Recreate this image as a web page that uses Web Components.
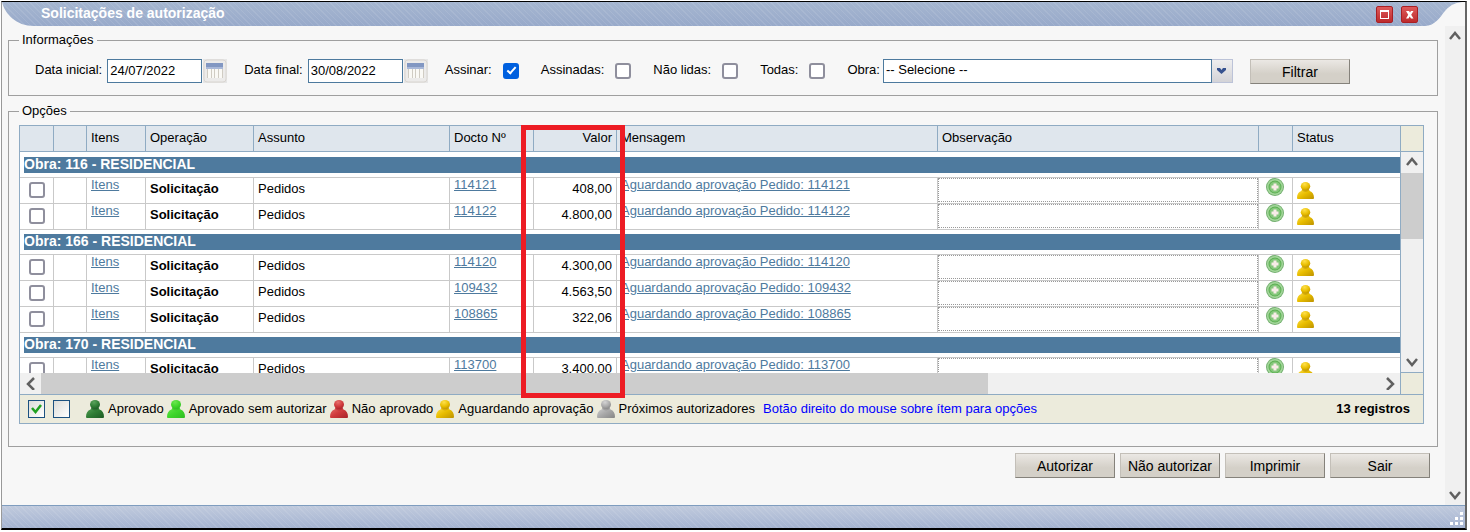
<!DOCTYPE html>
<html lang="pt-BR">
<head>
<meta charset="utf-8">
<title>Solicitações de autorização</title>
<style>
  body {
    margin: 0;
    background: #fff;
    color: #000;
    font: 13px/14px "Liberation Sans", Arial, sans-serif;
  }
</style>
</head>
<body>
<app-window heading="Solicitações de autorização">
  <field-group heading="Informações">
    <filter-bar></filter-bar>
  </field-group>
  <field-group heading="Opções" class="tall">
    <request-grid></request-grid>
  </field-group>
  <button-row>
    <push-button>Autorizar</push-button>
    <push-button>Não autorizar</push-button>
    <push-button>Imprimir</push-button>
    <push-button>Sair</push-button>
  </button-row>
</app-window>

<script>
const stripes = "repeating-linear-gradient(45deg, rgba(255,255,255,.09) 0 1px, transparent 1px 4px)";

const checkboxCss = `
  input[type=checkbox] {
    appearance: none;
    flex: none;
    display: block;
    width: 16px;
    height: 16px;
    margin: 0;
    border: 2px solid #8f8f9d;
    border-radius: 3px;
    background: #fff;
    box-sizing: border-box;
  }
  input[type=checkbox]:checked {
    border-color: #0060df;
    background: #0060df;
  }
  input[type=checkbox]:checked::after {
    content: "";
    display: block;
    width: 3px;
    height: 7px;
    margin: 0 0 0 4px;
    border: solid #fff;
    border-width: 0 2px 2px 0;
    transform: rotate(42deg);
  }
`;

class AppWindow extends HTMLElement {
  constructor() {
    super();
    const shadow = this.attachShadow({ mode: "open" });
    shadow.innerHTML = `
      <style>
        :host {
          display: flex;
          flex-direction: column;
          box-sizing: border-box;
          min-height: calc(100vh - 3px);
          margin: 1px 3px 2px 1px;
          background: #f7f7f7;
          border: solid #000;
          border-width: 1px 2px 2px 1px;
          border-left-color: #999;
          border-right-color: #666;
        }
        header {
          display: flex;
          align-items: center;
          height: 24px;
          background: ${stripes}, linear-gradient(#a5b6d0, #98aaca);
        }
        header svg { display: block; flex: none; }
        h1 {
          flex: 1;
          margin: 0 0 0 7px;
          padding-bottom: 2px;
          color: #fff;
          font-size: 14px;
          line-height: 16px;
        }
        .tools { display: flex; gap: 8px; margin-right: 7px; }
        .tools button {
          width: 17px;
          height: 17px;
          padding: 0;
          border: 1px solid #a91f24;
          border-radius: 2px;
          background: linear-gradient(#de5a5a, #bd2a2c);
        }
        .body { flex: 1; display: flex; }
        main { flex: 1; min-width: 0; padding: 7px 7px 0 6px; }
        scroll-bar { flex: none; width: 20px; }
        footer {
          display: flex;
          justify-content: flex-end;
          align-items: flex-end;
          height: 22px;
          border-top: 1px solid #7f9dbf;
          background: ${stripes}, linear-gradient(#c0cadd, #a5b4d1);
        }
        footer svg { display: block; margin: 0 2px 3px 0; }
      </style>
      <header>
        <svg width="32" height="24" viewBox="0 0 32 24"><path fill="#f7f7f7" d="M0 0C3 12 14 24 32 24H0Z"/></svg>
        <h1></h1>
        <div class="tools">
          <button type="button" aria-label="Maximizar"><svg width="15" height="15" viewBox="0 0 15 15"><path fill="#fff" fill-rule="evenodd" d="M3 3h9v9H3ZM4 5v6h7V5Z"/></svg></button>
          <button type="button" aria-label="Fechar"><svg width="15" height="15" viewBox="0 0 15 15"><path fill="#fff" d="M4 4h3l1 1.500 1-1.500h2.500L9.200 7.700 11.500 11.500H9L7.700 9.500 6.500 11.500H4l2.200-3.700Z"/></svg></button>
        </div>
        <svg width="40" height="24" viewBox="0 0 40 24"><path fill="#f7f7f7" d="M0 24C10 24 15 15 20 9 26 2 32 0 40 0V24Z"/></svg>
      </header>
      <div class="body">
        <main><slot></slot></main>
        <scroll-bar></scroll-bar>
      </div>
      <footer>
        <svg width="14" height="13" viewBox="0 0 14 13" fill="#fff"><path d="M11 0h3v3h-3zM11 5h3v3h-3zM6 5h3v3H6zM11 10h3v3h-3zM6 10h3v3H6zM1 10h3v3H1z"/></svg>
      </footer>
    `;
    shadow.querySelector("h1").textContent = this.getAttribute("heading");
  }
}

class FieldGroup extends HTMLElement {
  constructor() {
    super();
    const shadow = this.attachShadow({ mode: "open" });
    shadow.innerHTML = `
      <style>
        :host { display: block; margin-bottom: 8px; }
        :host(.tall) { margin-bottom: 6px; }
        fieldset {
          min-width: 0;
          margin: 0;
          padding: 12px 13px 11px 10px;
          border: 1px solid #9f9f9f;
        }
        :host(.tall) fieldset { padding-top: 7px; padding-bottom: 22px; }
        legend { padding: 0 3px; }
      </style>
      <fieldset>
        <legend></legend>
        <slot></slot>
      </fieldset>
    `;
    shadow.querySelector("legend").textContent = this.getAttribute("heading");
  }
}

class PushButton extends HTMLElement {
  constructor() {
    super();
    this.attachShadow({ mode: "open" }).innerHTML = `
      <style>
        :host { display: block; }
        button {
          display: block;
          width: 100px;
          height: 25px;
          padding: 0;
          border: 1px solid;
          border-color: #c3bfb8 #85827b #85827b #c3bfb8;
          background: linear-gradient(#ebe8e4, #d4d0c8 60%);
          color: #000;
          font: 14px/16px "Liberation Sans", Arial, sans-serif;
          white-space: nowrap;
        }
      </style>
      <button type="button"><slot></slot></button>
    `;
  }
}

class ButtonRow extends HTMLElement {
  constructor() {
    super();
    this.attachShadow({ mode: "open" }).innerHTML = `
      <style>
        :host {
          display: flex;
          justify-content: flex-end;
          gap: 5px;
          padding-right: 8px;
        }
      </style>
      <slot></slot>
    `;
  }
}

class FilterBar extends HTMLElement {
  constructor() {
    super();
    this.attachShadow({ mode: "open" }).innerHTML = `
      <style>
        :host {
          display: flex;
          align-items: flex-start;
          gap: 17px;
          padding-left: 16px;
          white-space: nowrap;
        }
      </style>
      <date-field label="Data inicial:" value="24/07/2022"></date-field>
      <date-field label="Data final:" value="30/08/2022"></date-field>
      <check-field label="Assinar:" checked></check-field>
      <check-field label="Assinadas:"></check-field>
      <check-field label="Não lidas:"></check-field>
      <check-field label="Todas:"></check-field>
      <combo-field label="Obra:" value="-- Selecione --"></combo-field>
      <push-button>Filtrar</push-button>
    `;
  }
}

class DateField extends HTMLElement {
  constructor() {
    super();
    this.attachShadow({ mode: "open" }).innerHTML = `
      <style>
        :host { display: flex; align-items: center; }
        label { padding-bottom: 2px; }
        input {
          box-sizing: border-box;
          width: 95px;
          height: 24px;
          margin: 0 1px 0 5px;
          padding: 0 2px 2px;
          border: 1px solid #4d7a9e;
          background: #fff;
          color: #000;
          font: inherit;
        }
        button {
          width: 24px;
          height: 24px;
          padding: 0;
          border: 0;
          background: none;
        }
        svg { display: block; }
      </style>
      <label for="date">${this.getAttribute("label")}</label>
      <input id="date" type="text" value="${this.getAttribute("value")}">
      <button type="button" aria-label="Calendário">
        <svg width="24" height="24" viewBox="0 0 24 24">
          <path fill="#e6e6e6" d="M0 0h24v24H0z"/>
          <rect x="1" y="1" width="22" height="22" rx="3" fill="#ecebea" stroke="#d9d5d0"/>
          <path fill="#8297c2" d="M3 4h17v5H3z"/>
          <path fill="#a9b8d8" d="M3 8h17v2H3z"/>
          <path fill="#d0ccc3" d="M4 10h16v9H4z"/>
          <path fill="#faf9f5" d="M5 10h3v9H5zM9 10h2v9H9zM12 10h3v9h-3zM16 10h3v9h-3z"/>
        </svg>
      </button>
    `;
  }
}

class CheckField extends HTMLElement {
  constructor() {
    super();
    this.attachShadow({ mode: "open" }).innerHTML = `
      <style>
        :host {
          display: flex;
          align-items: center;
          gap: 11px;
          height: 24px;
          padding-right: 5px;
        }
        label { padding-bottom: 2px; }
        ${checkboxCss}
      </style>
      <label for="box">${this.getAttribute("label")}</label>
      <input id="box" type="checkbox" ${this.hasAttribute("checked") ? "checked" : ""}>
    `;
  }
}

class ComboField extends HTMLElement {
  constructor() {
    super();
    this.attachShadow({ mode: "open" }).innerHTML = `
      <style>
        :host { display: flex; align-items: center; }
        label { padding-bottom: 2px; }
        select {
          appearance: none;
          box-sizing: border-box;
          width: 329px;
          height: 24px;
          margin: 0 0 0 3px;
          padding: 0 2px 2px;
          border: 1px solid #4d7a9e;
          border-radius: 0;
          background: #fff;
          color: #000;
          font: inherit;
        }
        .arrow {
          display: grid;
          place-items: center;
          box-sizing: border-box;
          width: 21px;
          height: 24px;
          border: 1px solid #bcc3d8;
          border-left: 0;
          background: linear-gradient(#eeeeef, #d3d3d7);
        }
      </style>
      <label for="combo">${this.getAttribute("label")}</label>
      <select id="combo"><option>${this.getAttribute("value")}</option></select>
      <span class="arrow">
        <svg width="11" height="8" viewBox="0 0 11 8"><path fill="#36528f" d="M1 1h3l1.500 2L7 1h3v2L5.500 7 1 3Z"/></svg>
      </span>
    `;
  }
}

class ScrollBar extends HTMLElement {
  constructor() {
    super();
    const across = this.hasAttribute("horizontal");
    const back = across ? "M9 1 3 7l6 6" : "M1 9l5-6 5 6";
    const forward = across ? "M3 1l6 6-6 6" : "M1 4l5 6 5-6";
    this.attachShadow({ mode: "open" }).innerHTML = `
      <style>
        :host {
          display: flex;
          flex-direction: ${across ? "row" : "column"};
          background: #f0f0f0;
        }
        button {
          flex: 0 0 21px;
          display: grid;
          place-items: center;
          padding: 0;
          border: 0;
          background: none;
        }
        .track { flex: 1; display: flex; flex-direction: inherit; }
        .thumb { flex: 0 0 var(--thumb, 0px); background: #cdcdcd; }
      </style>
      <button type="button" aria-label="Voltar">${this.chevron(back)}</button>
      <div class="track"><div class="thumb"></div></div>
      <button type="button" aria-label="Avançar">${this.chevron(forward)}</button>
    `;
  }

  chevron(d) {
    return `<svg width="12" height="13" viewBox="0 0 12 13"><path d="${d}" fill="none" stroke="#606060" stroke-width="2.500"/></svg>`;
  }
}

// light, base and dark tone of each status
const statusColors = {
  approved: ["#5aa35c", "#2f7d35", "#1c5a24"],
  direct: ["#6be64e", "#3fd62a", "#2ebc20"],
  refused: ["#e8706c", "#cf3a3c", "#a82429"],
  waiting: ["#ffe04a", "#e8bd00", "#bd9200"],
  next: ["#d4d4d4", "#a9a9a9", "#858585"]
};

class StatusPerson extends HTMLElement {
  constructor() {
    super();
    const [light, base, dark] = statusColors[this.getAttribute("status")];
    this.attachShadow({ mode: "open" }).innerHTML = `
      <style>
        :host { display: block; flex: none; width: 18px; height: 18px; }
        :host([small]) { width: 17px; height: 17px; }
        svg { display: block; width: 100%; height: 100%; }
      </style>
      <svg viewBox="0 0 18 18">
        <defs>
          <radialGradient id="head" cx=".4" cy=".25" r=".8">
            <stop offset="0" stop-color="${light}"/><stop offset=".6" stop-color="${base}"/><stop offset="1" stop-color="${dark}"/>
          </radialGradient>
          <linearGradient id="torso" x2="1" y2="1">
            <stop offset="0" stop-color="${light}"/><stop offset=".5" stop-color="${base}"/><stop offset="1" stop-color="${dark}"/>
          </linearGradient>
        </defs>
        <path fill="url(#torso)" d="M0 17C0 13 1.500 10.500 4.500 9.500L6 7h6l1.500 2.500C16.500 10.500 18 13 18 17q0 1-1 1H1q-1 0-1-1Z"/>
        <path fill="${dark}" opacity=".5" d="M5 8.500q4 4 8 0L12 7H6Z"/>
        <ellipse cx="9" cy="4.500" rx="5" ry="4.500" fill="url(#head)"/>
      </svg>
    `;
  }
}

const groups = [
  ["Obra: 116 - RESIDENCIAL", [["114121", "408,00"], ["114122", "4.800,00"]]],
  ["Obra: 166 - RESIDENCIAL", [["114120", "4.300,00"], ["109432", "4.563,50"], ["108865", "322,06"]]],
  ["Obra: 170 - RESIDENCIAL", [["113700", "3.400,00"]]]
];

const addIcon = `
  <svg width="18" height="18" viewBox="0 0 18 18">
    <circle cx="9" cy="9" r="9" fill="#74b070"/>
    <circle cx="9" cy="9" r="8" fill="#a5d79c"/>
    <circle cx="9" cy="9" r="6.500" fill="#5cb052"/>
    <circle cx="9" cy="9" r="5.500" fill="#85c77b"/>
    <path fill="#f8ece8" d="M7.500 5.500h3v2h2v3h-2v2h-3v-2h-2v-3h2z"/>
  </svg>`;

class RequestGrid extends HTMLElement {
  constructor() {
    super();
    this.attachShadow({ mode: "open" }).innerHTML = `
      <style>
        :host {
          display: block;
          position: relative;
          border: 1px solid #8fabc3;
          background: #ecebdc;
        }
        .panes {
          display: grid;
          grid-template-columns: minmax(0, 1fr) 23px;
          grid-template-rows: 26px 221px 21px;
        }
        .head { overflow: hidden; background: #dfe6ed; border-bottom: 1px solid #8fabc3; }
        .rows { overflow: hidden; padding-top: 1px; box-sizing: border-box; background: #fff; }
        .side { border-left: 1px solid #8fabc3; }
        .line { border-bottom: 1px solid #8fabc3; }
        .panes scroll-bar { min-width: 0; }
        .down { --thumb: 66px; }
        .across { --thumb: 947px; }

        table {
          width: 100%;
          table-layout: fixed;
          border-spacing: 0;
        }
        th, td {
          box-sizing: border-box;
          padding: 0 4px;
          text-align: left;
          white-space: nowrap;
          overflow: hidden;
        }
        th {
          height: 25px;
          padding-bottom: 2px;
          font-weight: normal;
          border-right: 1px solid #8fabc3;
        }
        td {
          height: 26px;
          padding-top: 4px;
          vertical-align: top;
          border: solid #c9c9c9;
          border-width: 0 1px 1px 0;
        }
        th:last-child, td:last-child { border-right: 0; }
        .num { text-align: right; }
        td.link, td.note, td.add { padding-top: 0; line-height: 13px; }
        td.pick { padding-left: 9px; }
        td.note { padding: 0; }
        td.add { padding-left: 7px; }
        td.group { height: 25px; padding: 4px 0 4px 4px; }
        .group div {
          padding-bottom: 2px;
          background: #4e7a9e;
          color: #fff;
          font-size: 14px;
          font-weight: bold;
        }
        a { color: #4e7a9e; }
        ${checkboxCss}
        .note input {
          display: block;
          box-sizing: border-box;
          width: 100%;
          height: 24px;
          border: 1px dotted #999;
          background: #fff;
          font: inherit;
        }
        .add button { display: block; padding: 0; border: 0; background: none; }
        svg { display: block; }

        footer {
          display: flex;
          align-items: center;
          gap: 3px;
          height: 28px;
          padding: 0 13px 0 8px;
          border-top: 1px solid #8fabc3;
          white-space: nowrap;
        }
        .mark {
          width: 17px;
          height: 18px;
          padding: 0;
          border: 1px solid #1c5180;
          background: linear-gradient(135deg, #dcdcd8, #fff);
        }
        .mark + .mark { margin: 0 13px 0 5px; }
        .item { display: flex; align-items: center; gap: 4px; }
        .hint { margin-left: 5px; color: #00f; }
        .count { margin-left: auto; font-weight: bold; }

        .highlight {
          position: absolute;
          left: 501px;
          top: -1px;
          box-sizing: border-box;
          width: 104px;
          height: 273px;
          border: 5px solid #ed1c24;
          pointer-events: none;
        }
      </style>
      <div class="panes">
        <div class="head">
          <table>
            ${this.columns()}
            <tr><th></th><th></th><th>Itens</th><th>Operação</th><th>Assunto</th><th>Docto Nº</th><th class="num">Valor</th><th>Mensagem</th><th>Observação</th><th></th><th>Status</th></tr>
          </table>
        </div>
        <div class="side line"></div>
        <div class="rows">
          <table>
            ${this.columns()}
            ${groups.map(([name, rows]) => `
              <tr><td class="group" colspan="11"><div>${name}</div></td></tr>
              ${rows.map((row) => this.row(row)).join("")}
            `).join("")}
          </table>
        </div>
        <scroll-bar class="side line down"></scroll-bar>
        <scroll-bar class="across" horizontal></scroll-bar>
        <div class="side"></div>
      </div>
      <footer>
        <button class="mark" type="button" aria-label="Marcar todos"><svg width="15" height="16" viewBox="0 0 15 16"><path d="M3 7l3.500 4L12 4" fill="none" stroke="#21a121" stroke-width="2.500"/></svg></button>
        <button class="mark" type="button" aria-label="Desmarcar todos"></button>
        ${this.legend("approved", "Aprovado")}
        ${this.legend("direct", "Aprovado sem autorizar")}
        ${this.legend("refused", "Não aprovado")}
        ${this.legend("waiting", "Aguardando aprovação")}
        ${this.legend("next", "Próximos autorizadores")}
        <span class="hint">Botão direito do mouse sobre ítem para opções</span>
        <span class="count">13 registros</span>
      </footer>
      <div class="highlight"></div>
    `;
  }

  columns() {
    const widths = [34, 33, 59, 108, 196, 84, 83, 321, 321, 34];
    return `<colgroup>${widths.map((w) => `<col style="width: ${w}px">`).join("")}<col></colgroup>`;
  }

  row([number, value]) {
    return `
      <tr>
        <td class="pick"><input type="checkbox" aria-label="Pedido ${number}"></td>
        <td></td>
        <td class="link"><a href="#">Itens</a></td>
        <td><b>Solicitação</b></td>
        <td>Pedidos</td>
        <td class="link"><a href="#">${number}</a></td>
        <td class="num">${value}</td>
        <td class="link"><a href="#">Aguardando aprovação Pedido: ${number}</a></td>
        <td class="note"><input type="text" aria-label="Observação ${number}"></td>
        <td class="add"><button type="button" aria-label="Adicionar">${addIcon}</button></td>
        <td><status-person status="waiting" small></status-person></td>
      </tr>`;
  }

  legend(status, text) {
    return `<span class="item"><status-person status="${status}"></status-person>${text}</span>`;
  }
}

customElements.define("scroll-bar", ScrollBar);
customElements.define("status-person", StatusPerson);
customElements.define("push-button", PushButton);
customElements.define("button-row", ButtonRow);
customElements.define("date-field", DateField);
customElements.define("check-field", CheckField);
customElements.define("combo-field", ComboField);
customElements.define("filter-bar", FilterBar);
customElements.define("request-grid", RequestGrid);
customElements.define("field-group", FieldGroup);
customElements.define("app-window", AppWindow);
</script>
</body>
</html>
